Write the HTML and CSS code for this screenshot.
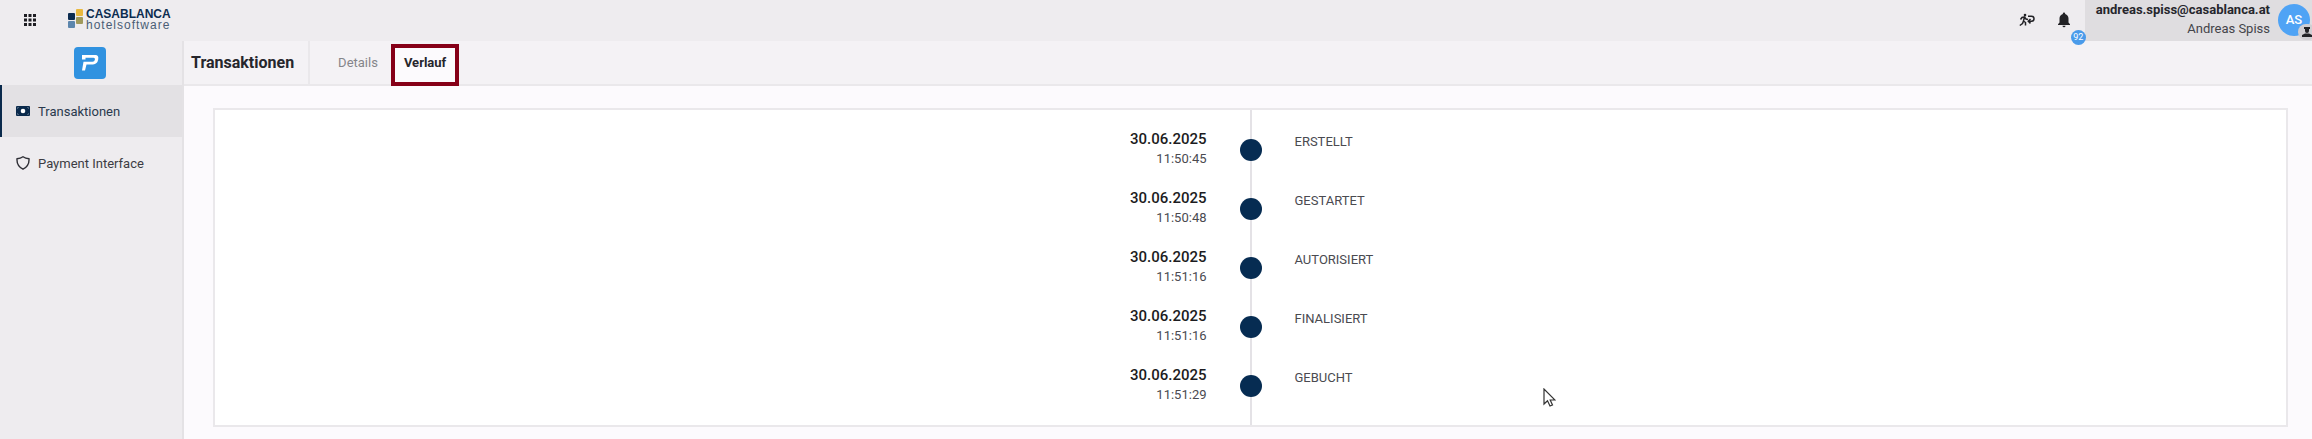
FILE: index.html
```html
<!DOCTYPE html>
<html lang="de">
<head>
    <meta charset="UTF-8">
    <meta name="viewport" content="width=device-width, initial-scale=1.0">
    <title>Transaktionen - Verlauf</title>
    <link rel="stylesheet" href="styles.css">
</head>
<body>
    <!-- Top Bar -->
    <header class="topbar">
        <button class="icon-button apps" aria-label="Apps">
            <svg width="14" height="14" viewBox="0 0 14 14" fill="#1d1d22">
                <path d="M1 1h3v3H1zM5.500 1h3v3h-3zM10 1h3v3h-3zM1 5.500h3v3H1zM5.500 5.500h3v3h-3zM10 5.500h3v3h-3zM1 10h3v3H1zM5.500 10h3v3h-3zM10 10h3v3h-3z"/>
            </svg>
        </button>
        <a href="#" class="logo">
            <svg width="18" height="22" viewBox="0 0 18 22">
                <rect x="9" y="0" width="7" height="7" rx="1" fill="#e9b93f"/>
                <rect x="1" y="4" width="7" height="7" rx="1" fill="#0c2c50"/>
                <rect x="9" y="8" width="7" height="7" rx="1" fill="#a09a5c"/>
                <rect x="1" y="12" width="7" height="7" rx="1" fill="#5c86ad"/>
            </svg>
            <span class="logo-text">
                <span class="logo-name">CASABLANCA</span>
                <span class="logo-sub">hotelsoftware</span>
            </span>
        </a>
        <div class="tools">
            <button class="icon-button" aria-label="Abmelden">
                <svg width="16" height="14" viewBox="0 0 16 14" fill="none" stroke="#222226" stroke-width="1.500">
                    <circle cx="6" cy="2" r="1.300" fill="#222226" stroke="none"/>
                    <path d="M1.500 6.500l1.500-2 2.500-.5-1 4 2 1.500v3M4.300 8.500L3.500 10.500.8 12.500M5.500 4l1.500 2 2 .5"/>
                    <path d="M9 3.200h3.500a2.500 2.500 0 0 1 0 5H9.500M11.500 6l-2.200 2.200 2.200 2.200"/>
                </svg>
            </button>
            <button class="icon-button bell" aria-label="Benachrichtigungen">
                <svg width="14" height="16" viewBox="0 0 14 16" fill="#222226">
                    <path d="M7 0.500a1.200 1.200 0 0 1 1.200 1.200v.4C10.300 2.700 11.500 4.500 11.500 6.500v4l1.500 1.700v.8H1v-.8l1.500-1.700v-4c0-2 1.200-3.800 3.300-4.400v-.4A1.200 1.200 0 0 1 7 .5zM5.500 13.700h3a1.500 1.500 0 0 1-3 0z"/>
                </svg>
                <span class="badge">92</span>
            </button>
        </div>
        <button class="user">
            <span class="user-text">
                <span class="user-mail">andreas.spiss@casablanca.at</span>
                <span class="user-name">Andreas Spiss</span>
            </span>
            <span class="avatar">AS
                <span class="role">
                    <svg width="10" height="12" viewBox="0 0 10 12" fill="#222226">
                        <path d="M2 1h6v2H2zM3 3h4v2a2 2 0 0 1-4 0zM0 11V9l3-1.500h4L10 9v2z"/>
                    </svg>
                </span>
            </span>
        </button>
    </header>

    <div class="page">
        <!-- Sidebar -->
        <nav class="sidebar">
            <div class="app-logo">
                <svg width="32" height="32" viewBox="0 0 32 32">
                    <rect width="32" height="32" rx="4" fill="#3092e0"/>
                    <path d="M8 8h13.500q3.500 0 2.700 4.500T19 17.500h-6.500L11 23.500H8L9.500 14.800H18.500q2 0 2.400-2t-1.400-2H11.500v1.700H8z" fill="#fff"/>
                </svg>
            </div>
            <a href="#" class="nav-item active">
                <svg width="14" height="10" viewBox="0 0 14 10">
                    <rect width="14" height="10" rx="1" fill="#0a2a4c"/>
                    <circle cx="7" cy="5" r="2.300" fill="#fff"/>
                    <path d="M1.500 3V1.500H3M11 1.500h1.500V3M1.500 7v1.500H3M11 8.500h1.500V7" fill="none" stroke="#6c8299" stroke-width=".6"/>
                </svg>
                Transaktionen
            </a>
            <a href="#" class="nav-item">
                <svg width="14" height="14" viewBox="0 0 14 14" fill="none" stroke="#2f2f36" stroke-width="1.400">
                    <path d="M7 .8Q9.500 2.600 13 2.800 13.500 10 7 13.200.5 10 1 2.800 4.500 2.600 7 .8z"/>
                </svg>
                Payment Interface
            </a>
        </nav>

        <!-- Main Content -->
        <main class="main">
            <div class="tabbar">
                <h1>Transaktionen</h1>
                <a href="#" class="tab">Details</a>
                <a href="#" class="tab tab-active">Verlauf</a>
            </div>

            <div class="card">
                <ul class="timeline">
                    <li>
                        <div class="when"><b>30.06.2025</b><time>11:50:45</time></div>
                        <span class="dot"></span>
                        <div class="status">ERSTELLT</div>
                    </li>
                    <li>
                        <div class="when"><b>30.06.2025</b><time>11:50:48</time></div>
                        <span class="dot"></span>
                        <div class="status">GESTARTET</div>
                    </li>
                    <li>
                        <div class="when"><b>30.06.2025</b><time>11:51:16</time></div>
                        <span class="dot"></span>
                        <div class="status">AUTORISIERT</div>
                    </li>
                    <li>
                        <div class="when"><b>30.06.2025</b><time>11:51:16</time></div>
                        <span class="dot"></span>
                        <div class="status">FINALISIERT</div>
                    </li>
                    <li>
                        <div class="when"><b>30.06.2025</b><time>11:51:29</time></div>
                        <span class="dot"></span>
                        <div class="status">GEBUCHT</div>
                    </li>
                </ul>
            </div>
        </main>
    </div>

    <!-- Mouse pointer -->
    <svg class="pointer" width="13" height="20" viewBox="0 0 13 20">
        <path d="M1 1v15l3.500-3.300L7 18l2.500-1-2.300-5H12z" fill="#fff" stroke="#333" stroke-width="1.200"/>
    </svg>
</body>
</html>
```
FILE: styles.css
```css
/* General Styles */
* {
    box-sizing: border-box;
}

body {
    margin: 0;
    min-height: 100vh;
    display: flex;
    flex-direction: column;
    font-family: Roboto, sans-serif;
    font-size: 13px;
    color: #26262c;
    background: #fcfafd;
    overflow: hidden;
}

a {
    color: inherit;
    text-decoration: none;
}

button {
    border: 0;
    padding: 0;
    background: none;
    font: inherit;
    color: inherit;
    cursor: pointer;
}

svg {
    display: block;
    flex: none;
}

/* Top Bar */
.topbar {
    display: flex;
    align-items: center;
    height: 41px;
    padding-bottom: 2px;
    background: #eeecef;
}

.apps {
    margin: 0 30px 0 23px;
}

.logo {
    display: flex;
    gap: 1px;
    color: #0c2c50;
}

.logo-text {
    display: flex;
    flex-direction: column;
    font-family: "Liberation Sans", Arial, sans-serif;
    line-height: 11px;
}

.logo-name {
    font-size: 12px;
    font-weight: bold;
}

.logo-sub {
    font-size: 12px;
    letter-spacing: 1px;
    color: #4a5d75;
}

.tools {
    display: flex;
    align-items: center;
    gap: 22px;
    margin-left: auto;
    margin-right: 14px;
}

.bell {
    position: relative;
}

.badge {
    position: absolute;
    top: 18px;
    left: 14px;
    width: 15px;
    height: 15px;
    border-radius: 50%;
    background: #4a9bea;
    color: #fff;
    font-size: 9px;
    line-height: 15px;
    text-align: center;
    z-index: 1;
}

/* User */
.user {
    display: flex;
    align-items: center;
    gap: 8px;
    height: 41px;
    margin-bottom: -2px;
    padding: 0 2px 2px 11px;
    background: #dfdde0;
}

.user-text {
    display: flex;
    flex-direction: column;
    padding-bottom: 2px;
    text-align: right;
    line-height: 19px;
}

.user-mail {
    font-weight: bold;
}

.user-name {
    color: #44444a;
}

.avatar {
    position: relative;
    width: 32px;
    height: 32px;
    border-radius: 50%;
    background: #4fa3f5;
    color: #fff;
    font-weight: 500;
    line-height: 32px;
    text-align: center;
}

.role {
    position: absolute;
    right: -6px;
    bottom: -4px;
    padding: 2px 4px;
    border-radius: 8px;
    background: #d0ced2;
}

/* Sidebar */
.page {
    display: flex;
    flex: 1;
}

.sidebar {
    width: 184px;
    flex: none;
    background: #eeecef;
    border-right: 2px solid #e4e2e5;
}

.app-logo {
    display: flex;
    justify-content: center;
    align-items: center;
    height: 44px;
    padding-right: 2px;
}

.nav-item {
    display: flex;
    align-items: center;
    gap: 8px;
    height: 52px;
    padding-left: 14px;
    border-left: 2px solid transparent;
    color: #3c3c43;
}

.nav-item.active {
    background: #e3e1e4;
    border-left-color: #0a2a4c;
    color: #29394d;
}

/* Main Content */
.main {
    flex: 1;
}

.tabbar {
    display: flex;
    height: 45px;
    background: #f4f2f5;
    border-bottom: 2px solid #eae8eb;
}

h1 {
    margin: 0;
    padding: 0 14px 0 7px;
    border-right: 2px solid #eae8eb;
    font-size: 16px;
    font-weight: bold;
    line-height: 44px;
}

.tab {
    padding: 0 13px 0 28px;
    line-height: 44px;
    color: #85858a;
}

.tab-active {
    height: 42px;
    margin-top: 3px;
    padding: 0 9px;
    border: 4px solid #860018;
    background: #fcfafd;
    color: #26262c;
    font-weight: bold;
    line-height: 30px;
}

/* Timeline */
.card {
    margin: 22px 24px 12px 29px;
    background: #fff;
    border: 2px solid #eae8eb;
}

.timeline {
    position: relative;
    margin: 0;
    padding: 20px 0 0;
    list-style: none;
}

.timeline::before {
    content: "";
    position: absolute;
    top: 0;
    bottom: 0;
    left: calc(50% - 1px);
    width: 2px;
    background: #e4e2e6;
}

.timeline li {
    display: flex;
    gap: 33px;
    height: 59px;
}

.when,
.status {
    flex: 1;
}

.when {
    display: flex;
    flex-direction: column;
    text-align: right;
    line-height: 19px;
}

.when b {
    font-size: 15px;
    font-weight: 500;
    color: #1c1c21;
}

.when time {
    color: #4a4a50;
}

.dot {
    position: relative;
    width: 22px;
    height: 22px;
    margin-top: 9px;
    border-radius: 50%;
    background: #062c52;
}

.status {
    line-height: 24px;
    color: #4a4a50;
}

.pointer {
    position: absolute;
    left: 1543px;
    top: 388px;
}
```
